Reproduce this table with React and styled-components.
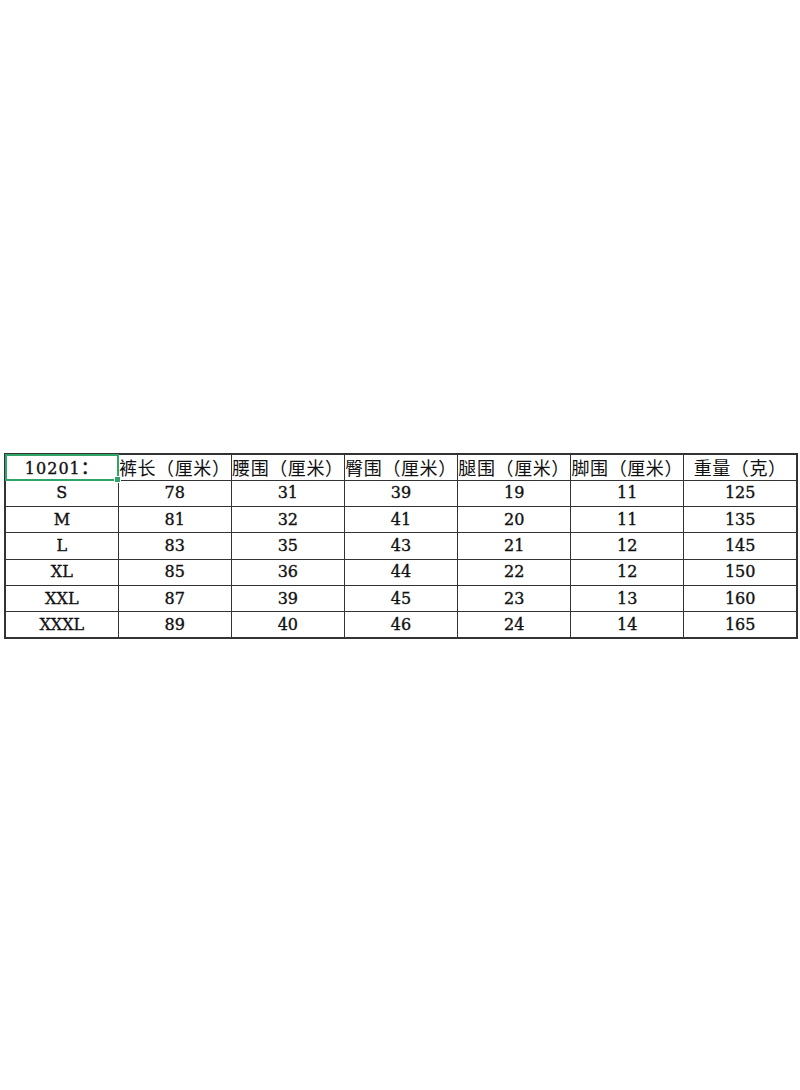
import React from "react";
import styled, { createGlobalStyle } from "styled-components";

const Global = createGlobalStyle`
  html, body { margin: 0; padding: 0; background: #fff; }
  body { font-family: "DejaVu Serif", "Noto Sans CJK SC", serif; color: #111; }
`;

const Page = styled.div`
  width: 800px;
  height: 1090px;
  padding: 453px 0 0 4px;
  box-sizing: border-box;
`;

const Table = styled.table`
  border-collapse: collapse;
  table-layout: fixed;
  width: 794px;
  border: 2px solid #333;
`;

const Row = styled.tr`
  height: 26.3px;
`;

const Cell = styled.td`
  position: relative;
  padding: 0;
  border: 1px solid #333;
  text-align: center;
  white-space: nowrap;
  overflow: visible;
  font-size: ${(p) => (p.$head ? "18px" : "16px")};
  font-family: ${(p) =>
    p.$head ? '"Noto Sans CJK SC", sans-serif' : '"DejaVu Serif", serif'};
  letter-spacing: ${(p) => (p.$head ? "0.6px" : "0")};
  -webkit-text-stroke: ${(p) => (p.$head ? "0" : "0.35px")};
  line-height: 1;
  color: #111;
`;

const Code = styled.span`
  font-family: "DejaVu Serif", serif;
  font-size: 16px;
  letter-spacing: 1px;
  -webkit-text-stroke: 0.35px;
`;

const Colon = styled.span`
  font-family: "Noto Sans CJK SC", sans-serif;
  font-size: 18px;
`;

const Selection = styled.div`
  position: absolute;
  inset: -1px;
  border: 2px solid #2fa56a;
  pointer-events: none;
  &::after {
    content: "";
    position: absolute;
    right: -4px;
    bottom: -4px;
    width: 5px;
    height: 5px;
    background: #2fa56a;
    border: 1px solid #fff;
  }
`;

const headers = [
  "裤长（厘米）",
  "腰围（厘米）",
  "臀围（厘米）",
  "腿围（厘米）",
  "脚围（厘米）",
  "重量（克）",
];

const rows = [
  ["S", 78, 31, 39, 19, 11, 125],
  ["M", 81, 32, 41, 20, 11, 135],
  ["L", 83, 35, 43, 21, 12, 145],
  ["XL", 85, 36, 44, 22, 12, 150],
  ["XXL", 87, 39, 45, 23, 13, 160],
  ["XXXL", 89, 40, 46, 24, 14, 165],
];

export default function App() {
  return (
    <Page>
      <Global />
      <Table>
        <tbody>
          <Row>
            <Cell>
              <Code>10201</Code>
              <Colon>：</Colon>
              <Selection />
            </Cell>
            {headers.map((h) => (
              <Cell $head key={h}>
                {h}
              </Cell>
            ))}
          </Row>
          {rows.map((r) => (
            <Row key={r[0]}>
              {r.map((v, i) => (
                <Cell key={i}>{v}</Cell>
              ))}
            </Row>
          ))}
        </tbody>
      </Table>
    </Page>
  );
}
